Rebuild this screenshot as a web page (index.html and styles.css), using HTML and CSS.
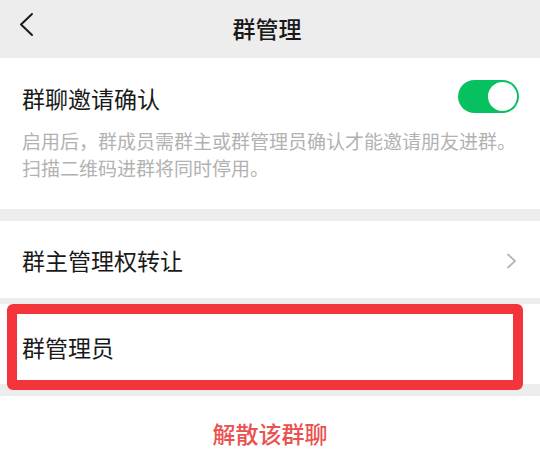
FILE: index.html
```html
<!DOCTYPE html>
<html lang="zh-CN">
<head>
<meta charset="utf-8">
<title>群管理</title>
<link rel="stylesheet" href="styles.css">
</head>
<body>
<div class="page">
  <header class="nav">
    <svg class="back" width="16" height="26" viewBox="0 0 16 26"><path d="M13 2 L2 12.5 L13 23" fill="none" stroke="#1b1b1b" stroke-width="2" stroke-linecap="round" stroke-linejoin="round"/></svg>
    <div class="nav-title">群管理</div>
  </header>

  <section class="card invite">
    <div class="invite-head">
      <div class="label">群聊邀请确认</div>
      <div class="switch"><span class="knob"></span></div>
    </div>
    <p class="desc">启用后，群成员需群主或群管理员确认才能邀请朋友进群。<br>扫描二维码进群将同时停用。</p>
  </section>

  <section class="card row row-transfer">
    <div class="label">群主管理权转让</div>
    <svg class="chev" width="12" height="16" viewBox="0 0 12 16"><path d="M2 1.5 L9 8 L2 14.5" fill="none" stroke="#b5b5b5" stroke-width="1.8" stroke-linecap="round" stroke-linejoin="round"/></svg>
  </section>

  <section class="card row row-admin">
    <div class="label">群管理员</div>
    <div class="highlight"></div>
  </section>

  <section class="card dismiss">
    <div class="dismiss-text">解散该群聊</div>
  </section>
</div>
</body>
</html>
```

FILE: styles.css
```css
html, body {
  margin: 0;
  padding: 0;
  background: #ededed;
}
body {
  font-family: "Noto Sans CJK SC", "Noto Sans", sans-serif;
  color: #191919;
}
.page {
  width: 540px;
  height: 466px;
  overflow: hidden;
  display: flex;
  flex-direction: column;
  background: #ededed;
}
.nav {
  height: 58px;
  flex: none;
  position: relative;
  display: flex;
  align-items: center;
  justify-content: center;
  background: #ededed;
}
.back {
  position: absolute;
  left: 19px;
  top: 12px;
}
.nav-title {
  font-size: 23px;
  font-weight: 500;
  margin-left: -6px;
  margin-top: -2px;
}
.card {
  background: #ffffff;
}
.label {
  font-size: 23px;
  line-height: 30px;
  color: #191919;
}
.invite {
  padding: 22px 21px 28px 22px;
  margin-bottom: 12px;
}
.invite-head {
  display: flex;
  align-items: center;
  justify-content: space-between;
  height: 33px;
}
.invite-head .label {
  margin-top: 2px;
}
.switch {
  width: 61px;
  height: 33px;
  border-radius: 17px;
  background: #07c160;
  position: relative;
}
.knob {
  position: absolute;
  right: 2px;
  top: 2px;
  width: 29px;
  height: 29px;
  border-radius: 50%;
  background: #ffffff;
}
.desc {
  margin: 14px 0 0 0;
  font-size: 19px;
  line-height: 27px;
  color: #b2b2b2;
}
.row {
  display: flex;
  align-items: center;
  justify-content: space-between;
  padding: 0 22px;
}
.row-transfer {
  height: 77px;
  margin-bottom: 6px;
}
.row-transfer .chev {
  margin-top: 2px;
}
.row-admin {
  height: 80px;
  margin-bottom: 12px;
  position: relative;
}
.row-admin .label {
  margin-top: 6px;
}
.highlight {
  position: absolute;
  left: 7px;
  top: 0;
  width: 496px;
  height: 66px;
  border: 10px solid #f3343a;
  border-radius: 6px;
}
.dismiss {
  flex: 1;
  display: flex;
  justify-content: center;
  padding-top: 22px;
}
.dismiss-text {
  font-size: 23px;
  font-weight: 500;
  line-height: 30px;
  color: #e9524f;
}
```
